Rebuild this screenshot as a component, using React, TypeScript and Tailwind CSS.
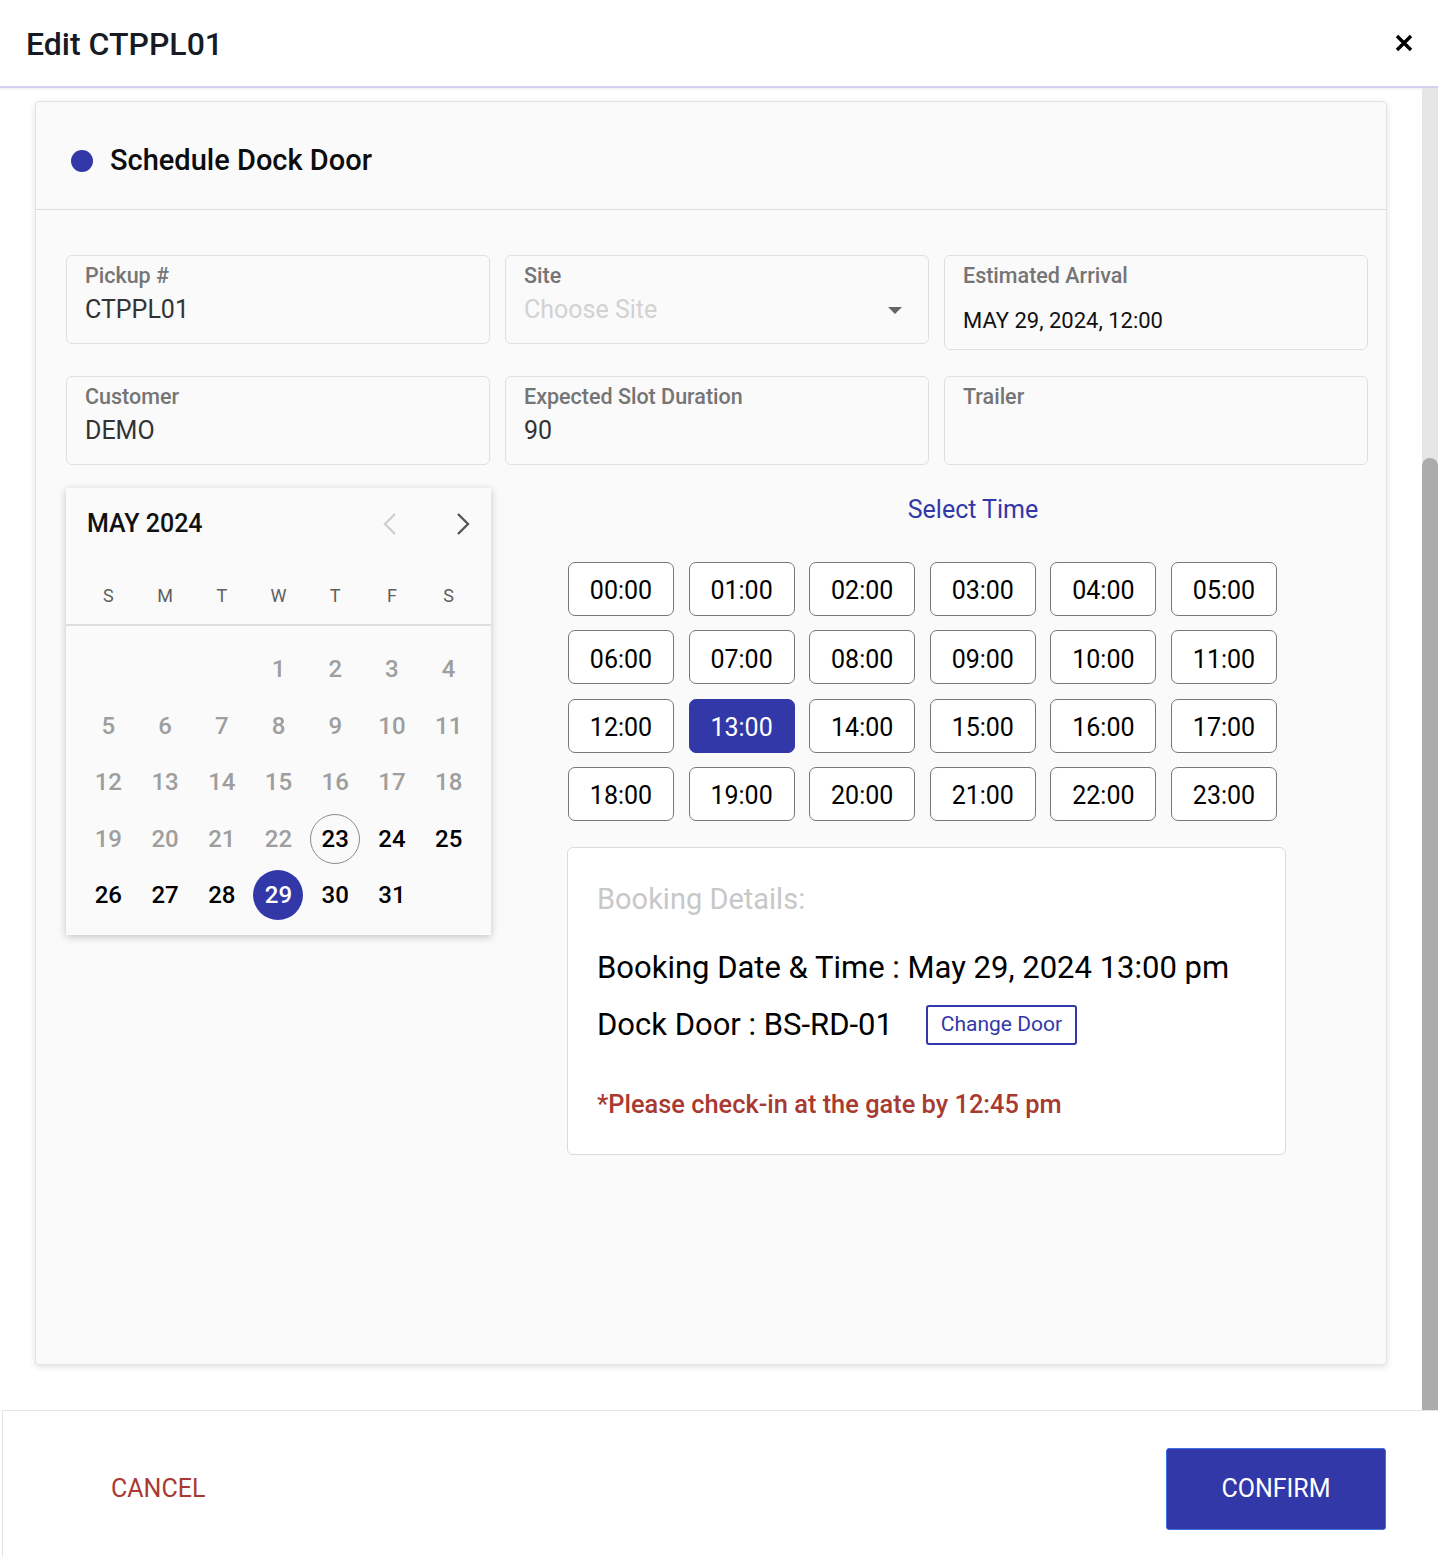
import { useState } from "react";

const WEEKDAYS = ["S", "M", "T", "W", "T", "F", "S"];
const HOURS = Array.from({ length: 24 }, (_, i) => `${String(i).padStart(2, "0")}:00`);
const TODAY = 23;

type FieldProps = {
  label: string;
  value?: string;
  placeholder?: string;
  select?: boolean;
};

function Field({ label, value, placeholder, select }: FieldProps) {
  return (
    <div className="relative h-[89px] rounded-[6px] border border-[#e0e0e0] bg-[#fafafa] px-[18px] pt-[8px]">
      <div className="text-[21.5px] font-medium leading-[24px] text-[#757575]">{label}</div>
      {value ? (
        <div className="mt-[7px] text-[25px] leading-[30px] text-[#333333]">{value}</div>
      ) : placeholder ? (
        <div className="mt-[7px] text-[25px] leading-[30px] text-[#d2d2d2]">{placeholder}</div>
      ) : null}
      {select ? (
        <svg
          className="absolute right-[26px] top-[51px]"
          width="14"
          height="7"
          viewBox="0 0 14 7"
        >
          <path d="M0 0h14L7 7z" fill="#666666" />
        </svg>
      ) : null}
    </div>
  );
}

function Calendar({ selected, onPick }: { selected: number; onPick: (d: number) => void }) {
  const cells: (number | null)[] = [null, null, null];
  for (let d = 1; d <= 31; d++) cells.push(d);

  return (
    <div className="w-[425px] shrink-0 self-start bg-[#fafafa] shadow-[0_2px_8px_rgba(0,0,0,0.22)]">
      <div className="flex h-[72px] items-center justify-between pl-[21px] pr-[20px]">
        <div className="text-[25px] font-medium text-[#111111]">MAY 2024</div>
        <div className="flex items-center gap-[57px]">
          <svg width="16" height="24" viewBox="0 0 16 24">
            <polyline
              points="13,2 3,12 13,22"
              fill="none"
              stroke="#cfcfcf"
              strokeWidth="2.4"
            />
          </svg>
          <svg width="16" height="24" viewBox="0 0 16 24">
            <polyline
              points="3,2 13,12 3,22"
              fill="none"
              stroke="#555555"
              strokeWidth="2.4"
            />
          </svg>
        </div>
      </div>
      <div className="grid h-[66px] grid-cols-7 items-center border-b-2 border-[#dedede] px-[14px] pt-[6px]">
        {WEEKDAYS.map((w, i) => (
          <div key={i} className="text-center text-[18px] text-[#5f5f5f]">
            {w}
          </div>
        ))}
      </div>
      <div className="grid grid-cols-7 px-[14px] pb-[11px] pt-[15px]">
        {cells.map((d, i) => (
          <div key={i} className="flex h-[56.5px] items-center justify-center">
            {d ? (
              <button
                type="button"
                onClick={() => d >= TODAY && onPick(d)}
                className={`flex h-[50px] w-[50px] items-center justify-center rounded-full text-[24px] font-medium ${
                  d === selected
                    ? "bg-[#3238a8] text-white"
                    : d === TODAY
                      ? "border border-[#8a8a8a] text-black"
                      : d > TODAY
                        ? "text-black"
                        : "text-[#9e9e9e]"
                }`}
              >
                {d}
              </button>
            ) : null}
          </div>
        ))}
      </div>
    </div>
  );
}

export default function App() {
  const [day, setDay] = useState(29);
  const [hour, setHour] = useState("13:00");

  return (
    <div className="flex h-[1557px] w-full flex-col overflow-hidden bg-white font-['Roboto',sans-serif]">
      <header className="flex h-[88px] shrink-0 items-center justify-between border-b-2 border-[#d2d2f0] pl-[26px] pr-[25px] shadow-[0_1px_3px_rgba(0,0,0,0.08)]">
        <h1 className="pt-[2px] text-[32px] font-medium text-[#161b26]">Edit CTPPL01</h1>
        <button type="button" aria-label="Close">
          <svg width="18" height="18" viewBox="0 0 18 18">
            <path d="M2 2L16 16M16 2L2 16" stroke="#000" strokeWidth="3.4" />
          </svg>
        </button>
      </header>

      <div className="flex h-[1322px] shrink-0">
        <div className="flex-1 pl-[35px] pr-[35px] pt-[13px]">
          <div className="h-[1264px] rounded-[4px] border border-[#e3e3e3] bg-[#fafafa] shadow-[0_2px_6px_rgba(0,0,0,0.12)]">
            <div className="flex h-[108px] items-center gap-[17px] border-b border-[#dedede] pl-[35px] pt-[10px]">
              <span className="h-[22px] w-[22px] rounded-full bg-[#3238a8]" />
              <span className="text-[29px] font-medium text-[#0d0d0d]">Schedule Dock Door</span>
            </div>

            <div className="pl-[30px] pr-[18px] pt-[45px]">
              <div className="grid grid-cols-3 items-start gap-x-[15px] gap-y-[26px]">
                <Field label="Pickup #" value="CTPPL01" />
                <Field label="Site" placeholder="Choose Site" select />
                <div className="h-[95px] rounded-[6px] border border-[#e0e0e0] bg-[#fafafa] px-[18px] pt-[8px]">
                  <div className="text-[21.5px] font-medium leading-[24px] text-[#757575]">
                    Estimated Arrival
                  </div>
                  <div className="mt-[21px] text-[22px] leading-[24px] text-[#111111]">
                    MAY 29, 2024, 12:00
                  </div>
                </div>
                <Field label="Customer" value="DEMO" />
                <Field label="Expected Slot Duration" value="90" />
                <Field label="Trailer" />
              </div>

              <div className="mt-[23px] flex">
                <Calendar selected={day} onPick={setDay} />

                <div className="ml-[77px] w-[800px]">
                  <div className="mt-[7px] pl-[10px] text-center text-[25px] leading-[30px] text-[#3238a8]">
                    Select Time
                  </div>

                  <div className="mt-[37px] grid grid-cols-[repeat(6,106px)] gap-x-[14.6px] gap-y-[14.3px]">
                    {HOURS.map((h) => (
                      <button
                        key={h}
                        type="button"
                        onClick={() => setHour(h)}
                        className={`h-[54px] rounded-[7px] border pt-[4px] text-[25px] ${
                          h === hour
                            ? "border-[#3238a8] bg-[#3238a8] text-white"
                            : "border-[#777777] bg-white text-black"
                        }`}
                      >
                        {h}
                      </button>
                    ))}
                  </div>

                  <div className="-ml-[1px] mt-[26px] w-[719px] rounded-[6px] border border-[#dcdcdc] bg-white px-[29px] pb-[36px] pt-[34px]">
                    <div className="text-[29px] leading-[34px] text-[#c8c8c8]">Booking Details:</div>
                    <div className="mt-[34px] text-[31px] leading-[36px] text-black">
                      Booking Date &amp; Time : May {day}, 2024 {hour} pm
                    </div>
                    <div className="mt-[19px] flex h-[40px] items-center">
                      <span className="text-[31px] leading-[36px] text-black">Dock Door : BS-RD-01</span>
                      <button
                        type="button"
                        className="ml-[33px] h-[40px] w-[151px] rounded-[3px] border-2 border-[#3238a8] text-[21px] text-[#3238a8]"
                      >
                        Change Door
                      </button>
                    </div>
                    <div className="mt-[45px] text-[25.4px] font-medium leading-[28px] text-[#a83a32]">
                      *Please check-in at the gate by 12:45 pm
                    </div>
                  </div>
                </div>
              </div>
            </div>
          </div>
        </div>

        <div className="flex w-[16px] shrink-0 flex-col justify-end bg-[#e6e6e6]">
          <div className="h-[952px] rounded-t-full bg-[#acacac]" />
        </div>
      </div>

      <footer className="ml-[2px] flex flex-1 items-center justify-between border-l border-t border-[#e4e4e4] bg-white pl-[108px] pr-[52px] pt-[9px]">
        <button type="button" className="text-[25px] text-[#a83a32]">
          CANCEL
        </button>
        <button
          type="button"
          className="h-[82px] w-[220px] rounded-[3px] border border-[#3f6fe0] bg-[#3238a8] text-[25px] text-white"
        >
          CONFIRM
        </button>
      </footer>
    </div>
  );
}
